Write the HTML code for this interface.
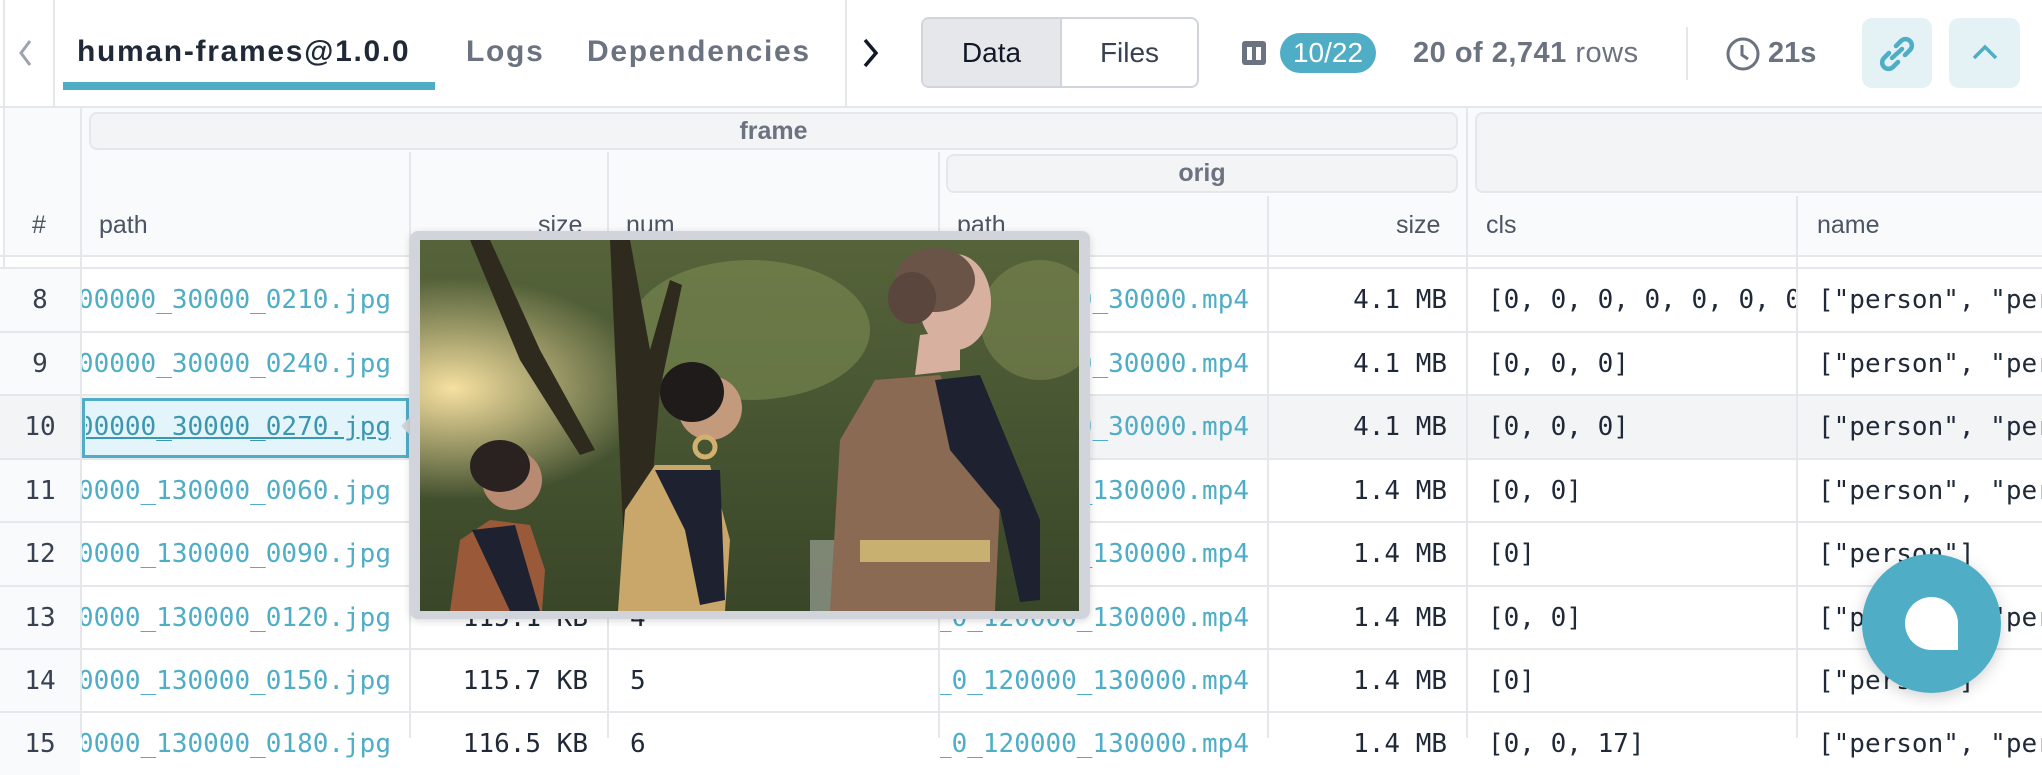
<!DOCTYPE html>
<html><head><meta charset="utf-8"><style>
*{box-sizing:border-box;margin:0;padding:0}
body{width:2042px;height:738px;overflow:hidden;background:#fff;font-family:"Liberation Sans",sans-serif;position:relative}
.a{position:absolute}
.tab{position:absolute;top:35px;font-size:30px;font-weight:bold;color:#6b7280;letter-spacing:1.7px}
.vl{position:absolute;width:2px;background:#e5e7eb}
.hl{position:absolute;height:2px;background:#e5e7eb;left:0;width:2042px}
.hd{position:absolute;font-size:25px;color:#4b5563;top:211px}
.grp{position:absolute;background:#f3f4f6;border:2px solid #e5e7eb;border-radius:8px;font-size:25px;font-weight:bold;color:#6b7280;text-align:center}
.row{position:absolute;left:0;width:2042px;height:63.5px}
.c{position:absolute;top:0;height:62px;line-height:62px;font-family:"DejaVu Sans Mono",monospace;font-size:26px;color:#1f2937;white-space:nowrap;overflow:hidden}
.r{display:flex;justify-content:flex-end}
.lk{color:#4fadc6}
.n{left:0;width:80px;text-align:center;background:#f9fafb;color:#374151;font-size:26px}
</style></head><body>
<div class="vl" style="left:3px;top:0;height:738px"></div>
<div class="vl" style="left:53px;top:0;height:107px"></div>
<div class="vl" style="left:845px;top:0;height:107px"></div>
<svg class="a" style="left:16px;top:38px" width="18" height="30" viewBox="0 0 18 30"><path d="M14 3 L5 15 L14 27" fill="none" stroke="#9ca3af" stroke-width="3"/></svg>
<div class="tab" style="left:77px;color:#1f2937">human-frames@1.0.0</div>
<div class="a" style="left:63px;top:82px;width:372px;height:8px;background:#4fadc6"></div>
<div class="tab" style="left:466px">Logs</div>
<div class="tab" style="left:587px">Dependencies</div>
<svg class="a" style="left:860px;top:37px" width="22" height="32" viewBox="0 0 22 32"><path d="M5 3 L16 16 L5 29" fill="none" stroke="#111827" stroke-width="3.5"/></svg>
<div class="a" style="left:921px;top:17px;width:278px;height:71px;border:2px solid #d1d5db;border-radius:8px;overflow:hidden;display:flex">
 <div style="width:139px;background:#e5e7eb;border-right:2px solid #d1d5db;font-size:28px;line-height:67px;text-align:center;color:#111827">Data</div>
 <div style="flex:1;font-size:28px;line-height:67px;text-align:center;color:#374151">Files</div>
</div>
<svg class="a" style="left:1241px;top:40px" width="26" height="26" viewBox="0 0 26 26"><rect x="1" y="1" width="24" height="24" rx="3" fill="#6b7280"/><rect x="6" y="7" width="5" height="13" fill="#fff"/><rect x="15" y="7" width="5" height="13" fill="#fff"/></svg>
<div class="a" style="left:1280px;top:33px;width:96px;height:40px;border-radius:20px;background:#4fadc6;color:#fff;font-size:28px;line-height:40px;text-align:center">10/22</div>
<div class="a" style="left:1413px;top:37px;font-size:29px;font-weight:bold;color:#6b7280;letter-spacing:0.5px">20 of 2,741 <span style="font-weight:normal">rows</span></div>
<div class="vl" style="left:1686px;top:27px;height:53px"></div>
<svg class="a" style="left:1725px;top:36px" width="36" height="36" viewBox="0 0 36 36"><circle cx="18" cy="18" r="15" fill="none" stroke="#6b7280" stroke-width="3"/><path d="M17 9 V19 L23 23" fill="none" stroke="#6b7280" stroke-width="3"/></svg>
<div class="a" style="left:1768px;top:37px;font-size:29px;font-weight:bold;color:#6b7280">21s</div>
<div class="a" style="left:1862px;top:18px;width:70px;height:70px;border-radius:10px;background:#e4f2f6"></div>
<svg class="a" style="left:1876px;top:36px" width="42" height="36" viewBox="0 0 42 36"><g fill="none" stroke="#4fadc6" stroke-width="4.5" stroke-linecap="round"><path d="M20 10 L25 5 a6 6 0 0 1 9 9 L29 19"/><path d="M22 26 L17 31 a6 6 0 0 1 -9 -9 L13 17"/><path d="M16 22 L26 13"/></g></svg>
<div class="a" style="left:1949px;top:18px;width:71px;height:70px;border-radius:10px;background:#e4f2f6"></div>
<svg class="a" style="left:1970px;top:42px" width="30" height="20" viewBox="0 0 30 20"><path d="M4 16 L15 5 L26 16" fill="none" stroke="#4fadc6" stroke-width="3.5"/></svg>
<div class="hl" style="top:106px"></div>
<div class="a" style="left:5px;top:108px;width:2037px;height:148px;background:#f9fafb"></div>
<div class="grp" style="left:89px;top:112px;width:1369px;height:38px;line-height:34px">frame</div>
<div class="grp" style="left:946px;top:154px;width:512px;height:39px;line-height:35px">orig</div>
<div class="grp" style="left:1475px;top:112px;width:580px;height:81px"></div>
<div class="hd" style="left:32px">#</div>
<div class="hd" style="left:99px">path</div>
<div class="hd" style="left:538px">size</div>
<div class="hd" style="left:626px">num</div>
<div class="hd" style="left:957px">path</div>
<div class="hd" style="left:1396px">size</div>
<div class="hd" style="left:1486px">cls</div>
<div class="hd" style="left:1817px">name</div>
<div class="hl" style="top:255px"></div>
<div class="row" style="top:267px;border-top:2px solid #e5e7eb"><div class="c n">8</div><div class="c r lk" style="left:82px;width:309px">video_000000_30000_0210.jpg</div><div class="c r" style="left:411px;width:177px">112.4 KB</div><div class="c" style="left:630px">1</div><div class="c r lk" style="left:940px;width:309px">video_000000_30000.mp4</div><div class="c r" style="left:1269px;width:178px">4.1 MB</div><div class="c" style="left:1488px;width:308px">[0, 0, 0, 0, 0, 0, 0, 0]</div><div class="c" style="left:1818px;width:224px">["person", "person"</div></div>
<div class="row" style="top:330.5px;border-top:2px solid #e5e7eb"><div class="c n">9</div><div class="c r lk" style="left:82px;width:309px">video_000000_30000_0240.jpg</div><div class="c r lk" style="left:940px;width:309px">video_000000_30000.mp4</div><div class="c r" style="left:1269px;width:178px">4.1 MB</div><div class="c" style="left:1488px">[0, 0, 0]</div><div class="c" style="left:1818px;width:224px">["person", "person"</div></div>
<div class="row" style="top:394px;border-top:2px solid #e5e7eb;background:#f3f4f6"><div class="c n" style="background:#f3f4f6">10</div><div class="a" style="left:82px;top:2px;width:327px;height:60px;background:#e3f5fa;border:3px solid #4fadc6"></div><div class="c r lk" style="left:86px;width:305px;text-decoration:underline;color:#3b97b0">video_000000_30000_0270.jpg</div><div class="c r lk" style="left:940px;width:309px">video_000000_30000.mp4</div><div class="c r" style="left:1269px;width:178px">4.1 MB</div><div class="c" style="left:1488px">[0, 0, 0]</div><div class="c" style="left:1818px;width:224px">["person", "person"</div></div>
<div class="row" style="top:457.5px;border-top:2px solid #e5e7eb"><div class="c n">11</div><div class="c r lk" style="left:82px;width:309px">video_0000_130000_0060.jpg</div><div class="c r lk" style="left:940px;width:309px">video_0_120000_130000.mp4</div><div class="c r" style="left:1269px;width:178px">1.4 MB</div><div class="c" style="left:1488px">[0, 0]</div><div class="c" style="left:1818px;width:224px">["person", "person"</div></div>
<div class="row" style="top:521px;border-top:2px solid #e5e7eb"><div class="c n">12</div><div class="c r lk" style="left:82px;width:309px">video_0000_130000_0090.jpg</div><div class="c r lk" style="left:940px;width:309px">video_0_120000_130000.mp4</div><div class="c r" style="left:1269px;width:178px">1.4 MB</div><div class="c" style="left:1488px">[0]</div><div class="c" style="left:1818px;width:224px">["person"]</div></div>
<div class="row" style="top:584.5px;border-top:2px solid #e5e7eb"><div class="c n">13</div><div class="c r lk" style="left:82px;width:309px">video_0000_130000_0120.jpg</div><div class="c r" style="left:411px;width:177px">115.1 KB</div><div class="c" style="left:630px">4</div><div class="c r lk" style="left:940px;width:309px">video_0_120000_130000.mp4</div><div class="c r" style="left:1269px;width:178px">1.4 MB</div><div class="c" style="left:1488px">[0, 0]</div><div class="c" style="left:1818px;width:224px">["person", "person"</div></div>
<div class="row" style="top:648px;border-top:2px solid #e5e7eb"><div class="c n">14</div><div class="c r lk" style="left:82px;width:309px">video_0000_130000_0150.jpg</div><div class="c r" style="left:411px;width:177px">115.7 KB</div><div class="c" style="left:630px">5</div><div class="c r lk" style="left:940px;width:309px">video_0_120000_130000.mp4</div><div class="c r" style="left:1269px;width:178px">1.4 MB</div><div class="c" style="left:1488px">[0]</div><div class="c" style="left:1818px;width:224px">["person"]</div></div>
<div class="row" style="top:711px;border-top:2px solid #e5e7eb"><div class="c n">15</div><div class="c r lk" style="left:82px;width:309px">video_0000_130000_0180.jpg</div><div class="c r" style="left:411px;width:177px">116.5 KB</div><div class="c" style="left:630px">6</div><div class="c r lk" style="left:940px;width:309px">video_0_120000_130000.mp4</div><div class="c r" style="left:1269px;width:178px">1.4 MB</div><div class="c" style="left:1488px">[0, 0, 17]</div><div class="c" style="left:1818px;width:224px">["person", "person"</div></div>
<div class="vl" style="left:80px;top:108px;height:630px"></div>
<div class="vl" style="left:409px;top:152px;height:586px"></div>
<div class="vl" style="left:607px;top:152px;height:586px"></div>
<div class="vl" style="left:938px;top:152px;height:586px"></div>
<div class="vl" style="left:1267px;top:196px;height:542px"></div>
<div class="vl" style="left:1466px;top:108px;height:630px"></div>
<div class="vl" style="left:1796px;top:196px;height:542px"></div>
<div class="a" style="left:401px;top:416px;width:0;height:0;border-top:10px solid transparent;border-bottom:10px solid transparent;border-right:10px solid #d1d5db"></div>
<div class="a" style="left:410px;top:231px;width:680px;height:388px;background:#d1d5db;border-radius:8px;box-shadow:0 2px 8px rgba(0,0,0,0.15)"></div>
<svg class="a" style="left:420px;top:240px" width="659" height="371" viewBox="0 0 659 371">
<defs><radialGradient id="sun" cx="0.05" cy="0.4" r="0.3"><stop offset="0" stop-color="#f6e0a0"/><stop offset="1" stop-color="#f6e0a0" stop-opacity="0"/></radialGradient>
<linearGradient id="bg" x1="0" y1="0" x2="0" y2="1"><stop offset="0" stop-color="#56633a"/><stop offset="0.6" stop-color="#445230"/><stop offset="1" stop-color="#3a4628"/></linearGradient></defs>
<rect width="659" height="371" fill="url(#bg)"/>
<ellipse cx="330" cy="90" rx="120" ry="70" fill="#7c8a52" opacity="0.6"/>
<ellipse cx="620" cy="80" rx="60" ry="60" fill="#7a8650" opacity="0.6"/>
<rect width="659" height="371" fill="url(#sun)"/>
<path d="M50 0 L70 0 L120 110 L175 210 L160 215 L100 120 Z" fill="#2f2a1e"/>
<path d="M190 0 L210 0 L230 110 L250 40 L262 45 L240 150 L225 330 L205 330 Z" fill="#2f2a1e"/>
<rect x="390" y="300" width="40" height="71" fill="#9aa094" opacity="0.7"/>
<path d="M30 371 L40 300 L70 280 L110 285 L125 330 L122 371 Z" fill="#9a5a3a"/>
<path d="M52 290 L95 285 L120 371 L90 371 Z" fill="#1e2230"/>
<circle cx="92" cy="240" r="30" fill="#b98a72"/>
<ellipse cx="80" cy="226" rx="30" ry="26" fill="#2a2220"/>
<path d="M198 371 L205 270 L235 225 L290 225 L310 300 L305 371 Z" fill="#c9a66a"/>
<path d="M235 230 L300 230 L305 360 L280 365 L265 290 Z" fill="#1e2230"/>
<circle cx="290" cy="168" r="32" fill="#c49a7c"/>
<ellipse cx="272" cy="152" rx="32" ry="30" fill="#1f1b1b"/>
<circle cx="285" cy="207" r="10" fill="none" stroke="#d2b070" stroke-width="5"/>
<path d="M410 371 L420 200 L455 140 L520 135 L580 260 L575 371 Z" fill="#8a6a52"/>
<path d="M515 140 L560 135 L620 280 L620 360 L600 362 L580 270 L530 210 Z" fill="#1e2230"/>
<rect x="440" y="300" width="130" height="22" fill="#c8b070"/>
<path d="M495 135 L540 130 L540 90 L500 95 Z" fill="#d8b0a0"/>
<ellipse cx="535" cy="62" rx="36" ry="48" fill="#d8b0a0"/>
<ellipse cx="515" cy="40" rx="40" ry="32" fill="#6a5448"/>
<ellipse cx="492" cy="58" rx="24" ry="26" fill="#5a463c"/>
</svg>
<div class="a" style="left:1862px;top:554px;width:139px;height:139px;border-radius:50%;background:#4fadc6;box-shadow:0 4px 16px rgba(0,0,0,0.18)"></div>
<div class="a" style="left:1905px;top:597px;width:53px;height:53px;background:#fff;border-radius:27px 27px 0 27px"></div>
</body></html>
